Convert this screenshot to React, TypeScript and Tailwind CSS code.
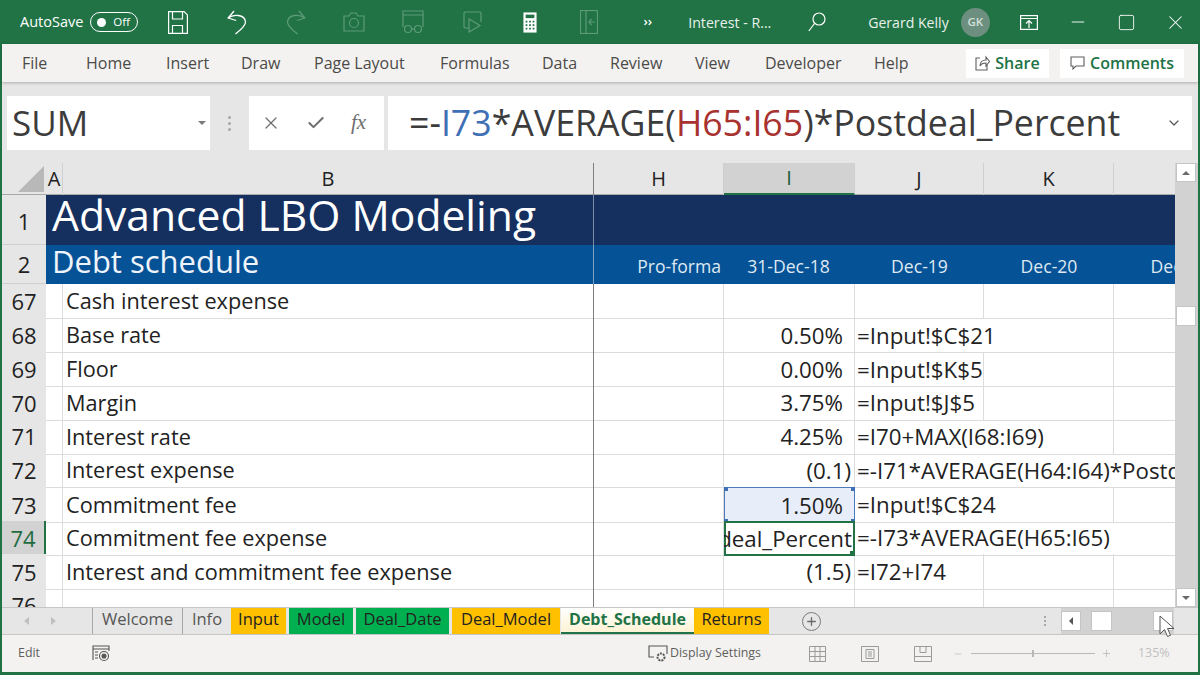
import { Check, ChevronDown, Minus, Plus, Square, X } from "lucide-react";

const FONT = "font-['Open_Sans','Noto_Sans',sans-serif]";
const GRID = "grid grid-cols-[44px_17px_531px_130px_131px_129px_130px_130px]";
const LINE = "border-r border-b border-[#dcdcdc]";

type RowData = {
  n: number;
  label: string;
  i?: string;
  iPad?: boolean;
  j?: string;
  span?: 1 | 2 | 3;
};

const rows: RowData[] = [
  { n: 67, label: "Cash interest expense" },
  { n: 68, label: "Base rate", i: "0.50%", iPad: true, j: "=Input!$C$21", span: 2 },
  { n: 69, label: "Floor", i: "0.00%", iPad: true, j: "=Input!$K$5" },
  { n: 70, label: "Margin", i: "3.75%", iPad: true, j: "=Input!$J$5" },
  { n: 71, label: "Interest rate", i: "4.25%", iPad: true, j: "=I70+MAX(I68:I69)", span: 2 },
  { n: 72, label: "Interest expense", i: "(0.1)", j: "=-I71*AVERAGE(H64:I64)*Postdeal_Percent", span: 3 },
  { n: 73, label: "Commitment fee", i: "1.50%", iPad: true, j: "=Input!$C$24", span: 2 },
  { n: 74, label: "Commitment fee expense", j: "=-I73*AVERAGE(H65:I65)", span: 3 },
  { n: 75, label: "Interest and commitment fee expense", i: "(1.5)", j: "=I72+I74" },
];

const tabs = [
  { name: "Input", cls: "w-[55px] bg-[#ffc000]" },
  { name: "Model", cls: "w-[64px] bg-[#00b050]" },
  { name: "Deal_Date", cls: "w-[93px] bg-[#00b050]" },
  { name: "Deal_Model", cls: "w-[108px] bg-[#ffc000]" },
];

const ribbonItems = [
  { label: "File", cls: "w-[64px]" },
  { label: "Home", cls: "w-[80px]" },
  { label: "Insert", cls: "w-[75px]" },
  { label: "Draw", cls: "w-[73px]" },
  { label: "Page Layout", cls: "w-[126px]" },
  { label: "Formulas", cls: "w-[102px]" },
  { label: "Data", cls: "w-[68px]" },
  { label: "Review", cls: "w-[85px]" },
  { label: "View", cls: "w-[70px]" },
  { label: "Developer", cls: "w-[109px]" },
  { label: "Help", cls: "w-[40px]" },
];

function TitleIcon({ children }: { children: React.ReactNode }) {
  return <div className="flex w-[58.7px] shrink-0 items-center justify-center">{children}</div>;
}

function TitleBar() {
  return (
    <div className="flex h-[44px] shrink-0 items-center bg-[#217346] pl-[20px] text-white">
      <span className="w-[70px] text-[14.5px]">AutoSave</span>
      <div className="flex h-[20px] w-[48px] items-center justify-between rounded-full border-[1.5px] border-white pl-[6px] pr-[7px]">
        <span className="h-[9px] w-[9px] rounded-full bg-white" />
        <span className="text-[11.5px]">Off</span>
      </div>
      <div className="ml-[11px] flex">
        <TitleIcon>
          <svg width="20" height="23" viewBox="0 0 20 23" fill="none" stroke="#fff" strokeWidth="1.2">
            <path d="M.6.6h15.500l3.300 3.300v18.500H.6z" />
            <path d="M4.500 1v7h10V1M4.500 22v-7.500h10V22" />
          </svg>
        </TitleIcon>
        <TitleIcon>
          <svg width="20" height="25" viewBox="0 0 20 25" fill="none" stroke="#fff" strokeWidth="1.3">
            <path d="M7 1L1.200 8l8 2.500" />
            <path d="M1.200 8C6 4 18 4 18.500 12c.2 4-5 8-10 12" />
          </svg>
        </TitleIcon>
        <TitleIcon>
          <svg width="20" height="25" viewBox="0 0 20 25" fill="none" stroke="#5c9a78" strokeWidth="1.3">
            <path d="M13 1l5.800 7-8 2.500" />
            <path d="M18.800 8C14 4 2 4 1.500 12c-.2 4 5 8 10 12" />
          </svg>
        </TitleIcon>
        <TitleIcon>
          <svg width="22" height="20" viewBox="0 0 22 20" fill="none" stroke="#5c9a78" strokeWidth="1.2">
            <path d="M1 4h5l2-3h5l2 3h6v15H1z" />
            <circle cx="11" cy="11" r="4.500" />
          </svg>
        </TitleIcon>
        <TitleIcon>
          <svg width="22" height="24" viewBox="0 0 22 24" fill="none" stroke="#5c9a78" strokeWidth="1.2">
            <path d="M1 17V1h20v16M1 5h20" />
            <circle cx="6" cy="19" r="3.500" />
            <circle cx="16" cy="19" r="3.500" />
            <path d="M9.500 19h3" />
          </svg>
        </TitleIcon>
        <TitleIcon>
          <svg width="22" height="22" viewBox="0 0 22 22" fill="none" stroke="#5c9a78" strokeWidth="1.2">
            <path d="M8 17H4l-1-1V2l1-1h15l1 1v9" />
            <path d="M8 8l11 6.500L8 21z" />
          </svg>
        </TitleIcon>
        <TitleIcon>
          <svg width="14" height="23" viewBox="0 0 16 24">
            <rect x="0.5" y="0.5" width="15" height="23" fill="#fff" />
            <rect x="3" y="3" width="10" height="4" fill="#217346" />
            <path d="M3 10h2v2H3zM7 10h2v2H7zM11 10h2v2h-2zM3 14h2v2H3zM7 14h2v2H7zM11 14h2v2h-2zM3 18h2v2H3zM7 18h2v2H7zM11 18h2v2h-2z" fill="#217346" />
          </svg>
        </TitleIcon>
        <TitleIcon>
          <svg width="18" height="24" viewBox="0 0 18 24" fill="none" stroke="#5c9a78" strokeWidth="1.2">
            <rect x="0.5" y="0.5" width="17" height="23" />
            <path d="M6 1v22M15 12H9M11.500 9L9 12l2.500 3" />
          </svg>
        </TitleIcon>
        <div className="flex w-[58.7px] items-center justify-center text-[13px] font-semibold">››</div>
      </div>
      <span className="ml-[11px] w-[85px] whitespace-nowrap pt-[2px] text-[14.2px] text-[#e8f1ec]">Interest - R...</span>
      <svg className="ml-[35px]" width="18" height="20" viewBox="0 0 18 20" fill="none" stroke="#fff" strokeWidth="1.2">
        <circle cx="11" cy="7" r="6" />
        <path d="M6.500 11.500L.8 19" />
      </svg>
      <span className="ml-[42px] whitespace-nowrap pt-[2px] text-[14.1px] text-[#e8f1ec]">Gerard Kelly</span>
      <div className="ml-[12px] flex h-[29px] w-[29px] items-center justify-center rounded-full bg-[#6c8f80] text-[11.5px] font-semibold text-[#d5e0da]">
        GK
      </div>
      <div className="ml-[29px] flex w-[20px] justify-center">
        <svg width="18" height="15" viewBox="0 0 18 15" fill="none" stroke="#fff" strokeWidth="1.2">
          <rect x="0.6" y="0.6" width="16.8" height="13.8" />
          <path d="M1 3.500h16M9 13V6M6 8.500L9 5.500l3 3" />
        </svg>
      </div>
      <Minus className="ml-[29px] h-[20px] w-[20px]" strokeWidth={1.1} />
      <Square className="ml-[29px] h-[19px] w-[19px]" strokeWidth={1.1} />
      <X className="ml-[28px] h-[23px] w-[23px]" strokeWidth={1.1} />
    </div>
  );
}

function Ribbon() {
  return (
    <div className="z-10 flex h-[38px] shrink-0 items-center bg-[#f3f2f1] pl-[20px] pr-[14px] shadow-[0_1px_3px_rgba(0,0,0,0.25)]">
      <div className="flex pb-[1px] text-[16px] text-[#4c4a48]">
        {ribbonItems.map((item) => (
          <span key={item.label} className={`${item.cls} whitespace-nowrap`}>
            {item.label}
          </span>
        ))}
      </div>
      <div className="ml-auto flex gap-[11px] text-[16px] font-semibold text-[#217346]">
        <div className="flex h-[29px] w-[83px] items-center justify-center gap-[5px] bg-white">
          <svg width="15" height="16" viewBox="0 0 15 16" fill="none" stroke="#605e5c" strokeWidth="1.1">
            <path d="M5 3H1v12h11v-5M5 11c0-4 3-6 6-6V2l3.500 4.500L11 11V8c-3 0-5 1-6 3z" />
          </svg>
          Share
        </div>
        <div className="flex h-[29px] w-[124px] items-center justify-center gap-[5px] bg-white">
          <svg width="15" height="15" viewBox="0 0 15 15" fill="none" stroke="#605e5c" strokeWidth="1.1">
            <path d="M1 1h13v9H6l-3 3v-3H1z" />
          </svg>
          Comments
        </div>
      </div>
    </div>
  );
}

function FormulaBar() {
  return (
    <div className="flex h-[81px] shrink-0 items-start bg-[#e6e6e6] pl-[5px] pr-[6px] pt-[14px]">
      <div className="flex h-[54px] w-[203px] items-center justify-between bg-white pl-[5px] pr-[4px] text-[35px] text-[#3c3c3c]">
        SUM
        <span className="h-0 w-0 border-x-[4px] border-t-[4px] border-x-transparent border-t-[#7a7a7a]" />
      </div>
      <div className="flex h-[54px] w-[39px] flex-col items-center justify-center gap-[3px]">
        <span className="h-[3px] w-[3px] rounded-full bg-[#a8a8a8]" />
        <span className="h-[3px] w-[3px] rounded-full bg-[#a8a8a8]" />
        <span className="h-[3px] w-[3px] rounded-full bg-[#a8a8a8]" />
      </div>
      <div className="flex h-[54px] w-[135px] items-center bg-white pl-[12px] text-[#6e6e6e]">
        <X className="h-[20px] w-[20px]" strokeWidth={1.5} />
        <Check className="ml-[25px] h-[20px] w-[20px]" strokeWidth={2.4} />
        <span className="ml-[25px] font-['Liberation_Serif',serif] text-[21px] italic">fx</span>
      </div>
      <div className="ml-[4px] flex h-[54px] flex-1 items-center justify-between bg-white pl-[21px] pr-[10px] text-[35.7px] text-[#3c3c3c]">
        <span className="whitespace-nowrap">
          =-<span className="text-[#3f6fb5]">I73</span>*AVERAGE(<span className="text-[#a8322f]">H65:I65</span>)*Postdeal_Percent
        </span>
        <ChevronDown className="h-[16px] w-[16px] text-[#555]" strokeWidth={1.8} />
      </div>
    </div>
  );
}

function ColumnHeaders() {
  const letter = "flex items-center justify-center border-r border-[#cfcfcf] text-[20px] text-[#222]";
  return (
    <div className={`${GRID} h-[32px] border-b border-[#a9a9a9] bg-[#e6e6e6]`}>
      <div className="flex items-end justify-end pb-[3px] pr-[2px]">
        <span className="h-0 w-0 border-b-[26px] border-l-[26px] border-b-[#b8b8b8] border-l-transparent" />
      </div>
      <div className={letter}>A</div>
      <div className={`${letter} border-r-[#7f7f7f]`}>B</div>
      <div className={letter}>H</div>
      <div className="flex items-center justify-center border-b-2 border-r border-b-[#217346] border-r-[#cfcfcf] bg-[#d2d2d2] text-[20px] text-[#1f5c3a]">I</div>
      <div className={letter}>J</div>
      <div className={letter}>K</div>
      <div className={letter} />
    </div>
  );
}

function Banners() {
  const head = "flex items-center justify-center border-b border-[#cfcfcf] bg-[#e6e6e6] text-[22px] text-[#222]";
  const date = "flex items-center justify-center pt-[3px] text-[17.6px] text-[#dfe9f3] whitespace-nowrap";
  return (
    <>
      <div className="flex h-[50px]">
        <div className={`${head} w-[44px] shrink-0 pt-[4px]`}>1</div>
        <div className="flex flex-1 bg-[#152f5f]">
          <div className="flex w-[548px] shrink-0 items-center border-r border-[#7f8ba3] pb-[12px] pl-[6px] text-[42.6px] leading-none text-white">
            Advanced LBO Modeling
          </div>
        </div>
      </div>
      <div className={`${GRID} h-[39px]`}>
        <div className={head}>2</div>
        <div className="col-span-2 flex items-center border-r border-[#7f9fc0] bg-[#065297] pb-[6px] pl-[6px] text-[31px] leading-none text-[#eef4fa]">
          Debt schedule
        </div>
        <div className={`${date} justify-end bg-[#065297] pr-[3px]`}>Pro-forma</div>
        <div className={`${date} bg-[#065297] pr-[2px]`}>31-Dec-18</div>
        <div className={`${date} bg-[#065297]`}>Dec-19</div>
        <div className={`${date} bg-[#065297]`}>Dec-20</div>
        <div className={`${date} bg-[#065297]`}>Dec-21</div>
      </div>
    </>
  );
}

function DataRow({ row }: { row: RowData }) {
  const selected = row.n === 74;
  const referenced = row.n === 73;
  const spanCls = row.span === 3 ? "col-span-3" : row.span === 2 ? "col-span-2" : "";
  return (
    <div className={`${GRID} h-[33.8px] text-[22.3px] text-[#222]`}>
      <div
        className={
          selected
            ? "flex items-center justify-center border-b border-r-2 border-[#cfcfcf] border-r-[#217346] bg-[#d2d2d2] pt-[1px] text-[22px] text-[#1f6b40]"
            : "flex items-center justify-center border-b border-[#cfcfcf] bg-[#e6e6e6] pt-[1px] text-[22px]"
        }
      >
        {row.n}
      </div>
      <div className={LINE} />
      <div className="flex items-center border-b border-r border-[#dcdcdc] border-r-[#7f7f7f] pl-[3px] pt-[1px] text-[21.7px] whitespace-nowrap">{row.label}</div>
      <div className={LINE} />
      {selected ? (
        <div className="relative overflow-hidden">
          <div className="flex h-full items-center justify-end border-2 border-[#217346] pr-[1px] pt-[1px] whitespace-nowrap">
            <span className="shrink-0">=-I73*AVERAGE(H65:I65)*Postdeal_Percent</span>
          </div>
          <span className="absolute bottom-0 right-0 h-[5px] w-[5px] bg-[#217346]" />
        </div>
      ) : referenced ? (
        <div className="relative flex items-center justify-end border border-[#4f79b8] bg-[#e8eef9] pr-[11px] pt-[1px]">
          {row.i}
          <span className="absolute -left-px -top-px h-[4px] w-[4px] bg-[#3f6fb5]" />
          <span className="absolute -right-px -top-px h-[4px] w-[4px] bg-[#3f6fb5]" />
          <span className="absolute -bottom-px -left-px h-[4px] w-[4px] bg-[#3f6fb5]" />
          <span className="absolute -bottom-px -right-px h-[4px] w-[4px] bg-[#3f6fb5]" />
        </div>
      ) : (
        <div className={`flex items-center justify-end pt-[1px] ${LINE} ${row.iPad ? "pr-[11px]" : "pr-[3px]"}`}>{row.i}</div>
      )}
      <div className={`flex items-center overflow-hidden pl-[2px] pt-[1px] whitespace-nowrap ${spanCls} ${LINE}`}>{row.j}</div>
      {!row.span && (
        <>
          <div className={LINE} />
          <div className={LINE} />
        </>
      )}
      {row.span === 2 && <div className={LINE} />}
    </div>
  );
}

function LastRow() {
  return (
    <div className={`${GRID} h-[19px] overflow-hidden text-[#222]`}>
      <div className="flex justify-center bg-[#e6e6e6] pt-[2px] text-[22px] leading-[30px]">76</div>
      <div className={LINE} />
      <div className="border-r border-[#7f7f7f]" />
      <div className={LINE} />
      <div className={LINE} />
      <div className={LINE} />
      <div className={LINE} />
      <div className={LINE} />
    </div>
  );
}

function VScroll() {
  return (
    <div className="flex w-[23px] shrink-0 flex-col items-center border-r border-[#cfcfcf] bg-[#d2d2d2]">
      <div className="flex h-[19px] w-[20px] items-center justify-center border border-[#c4c4c4] bg-white">
        <span className="h-0 w-0 border-x-[4px] border-b-[4px] border-x-transparent border-b-[#6a6a6a]" />
      </div>
      <div className="mt-[124px] h-[20px] w-[20px] border border-[#c4c4c4] bg-white" />
      <div className="mt-auto flex h-[19px] w-[20px] items-center justify-center border border-[#c4c4c4] bg-white">
        <span className="h-0 w-0 border-x-[4px] border-t-[4px] border-x-transparent border-t-[#6a6a6a]" />
      </div>
    </div>
  );
}

function SheetTabs() {
  return (
    <div className="flex h-[28px] shrink-0 items-stretch border-y border-[#c6c6c6] bg-[#e6e6e6] text-[16.5px] text-[#222]">
      <div className="flex w-[90px] items-center pl-[22px] text-[#b5b5b5]">
        <span className="h-0 w-0 border-y-[4px] border-r-[5px] border-y-transparent border-r-[#c0c0c0]" />
        <span className="ml-[22px] h-0 w-0 border-y-[4px] border-l-[5px] border-y-transparent border-l-[#c0c0c0]" />
      </div>
      <div className="flex w-[90px] items-center justify-center border-l border-[#a8a8a8] pb-[3px] text-[#555]">Welcome</div>
      <div className="flex w-[49px] items-center justify-center border-l border-[#a8a8a8] pb-[3px] text-[#555]">Info</div>
      <div className="flex gap-[3px]">
        {tabs.map((tab) => (
          <div key={tab.name} className={`flex items-center justify-center pb-[3px] ${tab.cls}`}>
            {tab.name}
          </div>
        ))}
      </div>
      <div className="ml-px flex w-[133px] items-center justify-center border-b-2 border-b-[#217346] bg-gradient-to-b from-white to-[#fdf3d4] pb-[2px] text-[16px] font-bold text-[#217346]">
        Debt_Schedule
      </div>
      <div className="flex w-[75px] items-center justify-center bg-[#ffc000] pb-[3px]">Returns</div>
      <div className="ml-[33px] flex items-center">
        <div className="flex h-[19px] w-[19px] items-center justify-center rounded-full border-[1.5px] border-[#7a7a7a]">
          <Plus className="h-[13px] w-[13px] text-[#6a6a6a]" strokeWidth={2.4} />
        </div>
      </div>
      <div className="ml-[217px] flex w-[14px] flex-col items-center justify-center gap-[2px]">
        <span className="h-[2px] w-[2px] bg-[#a8a8a8]" />
        <span className="h-[2px] w-[2px] bg-[#a8a8a8]" />
        <span className="h-[2px] w-[2px] bg-[#a8a8a8]" />
      </div>
      <div className="relative ml-[9px] flex w-[113px] items-center bg-[#d2d2d2]">
        <div className="flex h-[20px] w-[20px] items-center justify-center border border-[#c4c4c4] bg-white">
          <span className="h-0 w-0 border-y-[4px] border-r-[4px] border-y-transparent border-r-[#555]" />
        </div>
        <div className="ml-[10px] h-[20px] w-[21px] border border-[#c4c4c4] bg-white" />
        <div className="ml-auto mr-[1px] flex h-[20px] w-[20px] items-center justify-center border border-[#c4c4c4] bg-white">
          <span className="h-0 w-0 border-y-[4px] border-l-[4px] border-y-transparent border-l-[#555]" />
        </div>
        <svg className="absolute left-[98px] top-[7px]" width="16" height="24" viewBox="0 0 16 24">
          <path d="M1 1v18l4.500-4.500 3 7 3-1.300-3-6.700H15z" fill="#fff" stroke="#555" strokeWidth="1" />
        </svg>
      </div>
    </div>
  );
}

function StatusBar() {
  return (
    <div className="flex h-[37px] shrink-0 items-center bg-[#f3f2f1] pl-[16px] text-[12.4px] text-[#605e5c]">
      <span className="w-[74px]">Edit</span>
      <svg width="18" height="17" viewBox="0 0 18 17" fill="none" stroke="#555" strokeWidth="1.1">
        <path d="M1 15V1h16v5M1 4h16M3 7h3M3 10h3M3 13h3" />
        <circle cx="12" cy="11" r="4.500" />
        <circle cx="12" cy="11" r="2" fill="#555" />
      </svg>
      <svg className="ml-[538px]" width="20" height="18" viewBox="0 0 20 18" fill="none" stroke="#555" strokeWidth="1.1">
        <path d="M6 12H1V1h18v8" />
        <circle cx="13" cy="12" r="3.500" strokeDasharray="2 1" strokeWidth="2" />
      </svg>
      <span className="ml-[2px] w-[139px] whitespace-nowrap">Display Settings</span>
      <div className="flex items-center gap-[35px] text-[#b0b0b0]">
        <svg width="17" height="16" viewBox="0 0 17 16" fill="none" stroke="#9a9a9a">
          <path d="M.5.5h16v15H.5zM.5 5.500h16M.5 10.500h16M6 .5v15M11 .5v15" />
        </svg>
        <svg width="18" height="16" viewBox="0 0 18 16" fill="none" stroke="#9a9a9a">
          <path d="M.5.5h17v15H.5zM5 3.500h8v9H5zM7 6h4M7 8h4M7 10h4" />
        </svg>
        <svg width="18" height="16" viewBox="0 0 18 16" fill="none" stroke="#9a9a9a">
          <path d="M.5.5h17v15H.5zM.5 10.500h17M6 .5v6h6v-6" />
        </svg>
      </div>
      <Minus className="ml-[21px] h-[10px] w-[10px] text-[#b0b0b0]" strokeWidth={1.5} />
      <div className="relative ml-[8px] h-px w-[124px] bg-[#b8b8b8]">
        <span className="absolute left-[61px] top-[-3px] h-[7px] w-[2px] bg-[#b8b8b8]" />
      </div>
      <Plus className="ml-[6px] h-[11px] w-[11px] text-[#b0b0b0]" strokeWidth={1.5} />
      <span className="ml-[26px] text-[#c0c0c0]">135%</span>
    </div>
  );
}

export default function App() {
  return (
    <div className={`flex h-[675px] w-[1200px] flex-col overflow-hidden border-b-[3px] border-[#217346] ${FONT}`}>
      <TitleBar />
      <div className="flex min-h-0 flex-1 flex-col border-x-2 border-[#217346]">
        <Ribbon />
        <FormulaBar />
        <div className="flex min-h-0 flex-1">
          <div className="w-[1173px] shrink-0 overflow-hidden bg-white">
            <ColumnHeaders />
            <Banners />
            {rows.map((row) => (
              <DataRow key={row.n} row={row} />
            ))}
            <LastRow />
          </div>
          <VScroll />
        </div>
        <SheetTabs />
        <StatusBar />
      </div>
    </div>
  );
}
